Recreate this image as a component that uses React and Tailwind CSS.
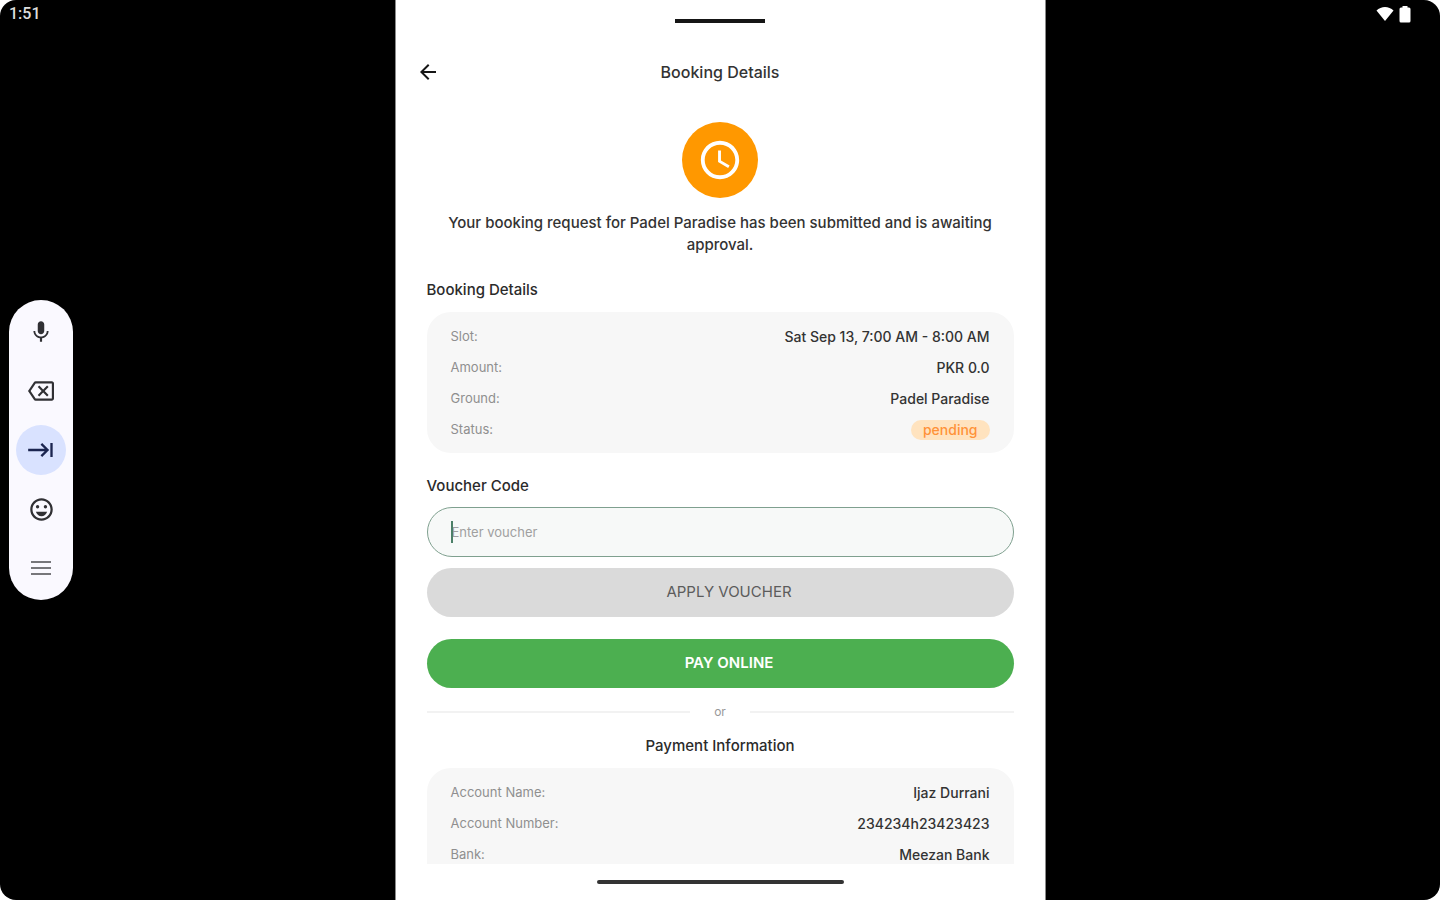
import React from "react";
import {
  MdMic,
  MdOutlineBackspace,
  MdKeyboardTab,
  MdOutlineEmojiEmotions,
  MdArrowBack,
  MdAccessTime,
} from "react-icons/md";

const booking = [
  ["Slot:", "Sat Sep 13, 7:00 AM - 8:00 AM"],
  ["Amount:", "PKR 0.0"],
  ["Ground:", "Padel Paradise"],
];

const payment = [
  ["Account Name:", "Ijaz Durrani"],
  ["Account Number:", "234234h23423423"],
  ["Bank:", "Meezan Bank"],
];

function Row({ label, children }) {
  return (
    <div className="flex h-[31px] shrink-0 items-center justify-between">
      <dt className="text-[13px] text-[#8f8f8f]">{label}</dt>
      <dd className="text-sm font-medium text-[#333333]">{children}</dd>
    </div>
  );
}

function Tool({ label, active, children }) {
  return (
    <button
      type="button"
      aria-label={label}
      className={
        active
          ? "flex size-[50px] items-center justify-center rounded-full bg-[#d9e2ff] text-[#1b2550]"
          : "flex size-[50px] items-center justify-center rounded-full text-[#303034]"
      }
    >
      {children}
    </button>
  );
}

function Toolbar() {
  return (
    <nav
      aria-label="Keyboard tools"
      className="ml-[9px] flex h-[300px] w-16 flex-col items-center justify-center gap-[9px] rounded-full bg-[#faf9ff]"
    >
      <Tool label="Voice input"><MdMic size={26} /></Tool>
      <Tool label="Delete"><MdOutlineBackspace size={26} /></Tool>
      <Tool label="Tab" active><MdKeyboardTab size={28} /></Tool>
      <Tool label="Emoji"><MdOutlineEmojiEmotions size={27} /></Tool>
      <Tool label="Menu">
        <svg width="20" height="16" viewBox="0 0 20 16" stroke="#77777b" strokeWidth="2">
          <path d="M0 2h20M0 8h20M0 14h20" />
        </svg>
      </Tool>
    </nav>
  );
}

export default function App() {
  return (
    <div className="h-screen bg-white font-['Inter',sans-serif]">
      <div className="grid h-full grid-cols-[1fr_minmax(0,651px)_1fr] overflow-hidden rounded-2xl bg-black">
        <aside className="grid grid-rows-[1fr_auto_1fr]">
          <time className="pt-1 pl-[9px] font-['Roboto',sans-serif] text-base leading-5 font-medium text-[#dddddd]">
            1:51
          </time>
          <Toolbar />
        </aside>

        <div className="flex min-h-0 flex-col border-x border-[#8a8a8a] bg-white">
          <div className="flex h-[42px] shrink-0 items-center justify-center">
            <div className="h-1 w-[90px] bg-[#151515]" />
          </div>
          <header className="grid h-[60px] shrink-0 grid-cols-[1fr_auto_1fr] items-center px-5">
            <button type="button" aria-label="Back" className="w-6 text-[#161616]">
              <MdArrowBack size={24} />
            </button>
            <h1 className="text-base font-medium text-[#333333]">Booking Details</h1>
          </header>

          <main className="min-h-0 flex-1 overflow-hidden px-[31px] pt-5">
            <div className="mx-auto flex size-[76px] items-center justify-center rounded-full bg-[#ff9800] text-white">
              <MdAccessTime size={46} />
            </div>
            <p className="mt-[14px] px-4 text-center text-[15px] leading-[22px] font-medium text-[#333333]">
              Your booking request for Padel Paradise has been submitted and is awaiting approval.
            </p>

            <h2 className="mt-6 text-[15px] leading-5 font-medium text-[#2b2b2b]">
              Booking Details
            </h2>
            <dl className="mt-3 rounded-3xl bg-[#f7f7f7] px-6 pt-[9px] pb-2">
              {booking.map(([label, value]) => (
                <Row key={label} label={label}>{value}</Row>
              ))}
              <Row label="Status:">
                <span className="flex h-5 items-center rounded-full bg-[#ffe3bf] px-3 text-[#ff9238]">
                  pending
                </span>
              </Row>
            </dl>

            <label
              htmlFor="voucher"
              className="mt-[23px] block text-[15px] leading-5 font-medium text-[#2b2b2b]"
            >
              Voucher Code
            </label>
            <div className="relative mt-[11px]">
              <input
                id="voucher"
                type="text"
                placeholder="Enter voucher"
                className="block h-[50px] w-full rounded-full border border-[#7fa08f] bg-[#f7f9f8] px-6 text-[13px] text-[#2b2b2b] outline-none placeholder:text-[#a0a0a0]"
              />
              <span className="absolute top-[14px] left-6 h-[22px] w-0.5 bg-[#4c8068]" />
            </div>
            <button
              type="button"
              className="mt-[11px] flex h-[49px] w-full items-center justify-center rounded-full bg-[#dadada] pl-[18px] text-[15px] text-[#5c5c5c]"
            >
              APPLY VOUCHER
            </button>
            <button
              type="button"
              className="mt-[22px] flex h-[49px] w-full items-center justify-center rounded-full bg-[#4caf50] pl-[18px] text-[15px] font-semibold text-white"
            >
              PAY ONLINE
            </button>

            <div className="mt-[14px] flex h-5 items-center text-xs text-[#999999]">
              <div className="h-0.5 flex-1 bg-[#f2f2f2]" />
              <span className="px-6">or</span>
              <div className="h-0.5 flex-1 bg-[#f2f2f2]" />
            </div>
            <h2 className="mt-[14px] text-center text-[15px] leading-5 font-medium text-[#2b2b2b]">
              Payment Information
            </h2>
            <dl className="mt-3 rounded-3xl bg-[#f7f7f7] px-6 pt-[9px] pb-12">
              {payment.map(([label, value]) => (
                <Row key={label} label={label}>{value}</Row>
              ))}
            </dl>
          </main>

          <footer className="flex h-9 shrink-0 items-center justify-center">
            <div className="h-1 w-[247px] rounded-full bg-[#333333]" />
          </footer>
        </div>

        <aside className="flex items-start justify-end gap-[5px] pt-1.5 pr-[29px] text-white">
          <svg width="18" height="16" viewBox="0 0 18 16" fill="currentColor" role="img" aria-label="Wi-Fi">
            <path d="M0.5 4.5C5 -0.3 13 -0.3 17.5 4.5L9 15Z" />
          </svg>
          <svg width="12" height="17" viewBox="0 0 12 17" fill="currentColor" role="img" aria-label="Battery">
            <path d="M3.5 0h5v1.5H10a1.5 1.5 0 0 1 1.500 1.500V15a1.500 1.500 0 0 1-1.500 1.500H2A1.500 1.500 0 0 1 0.500 15V3A1.500 1.500 0 0 1 2 1.500h1.500z" />
          </svg>
        </aside>
      </div>
    </div>
  );
}
